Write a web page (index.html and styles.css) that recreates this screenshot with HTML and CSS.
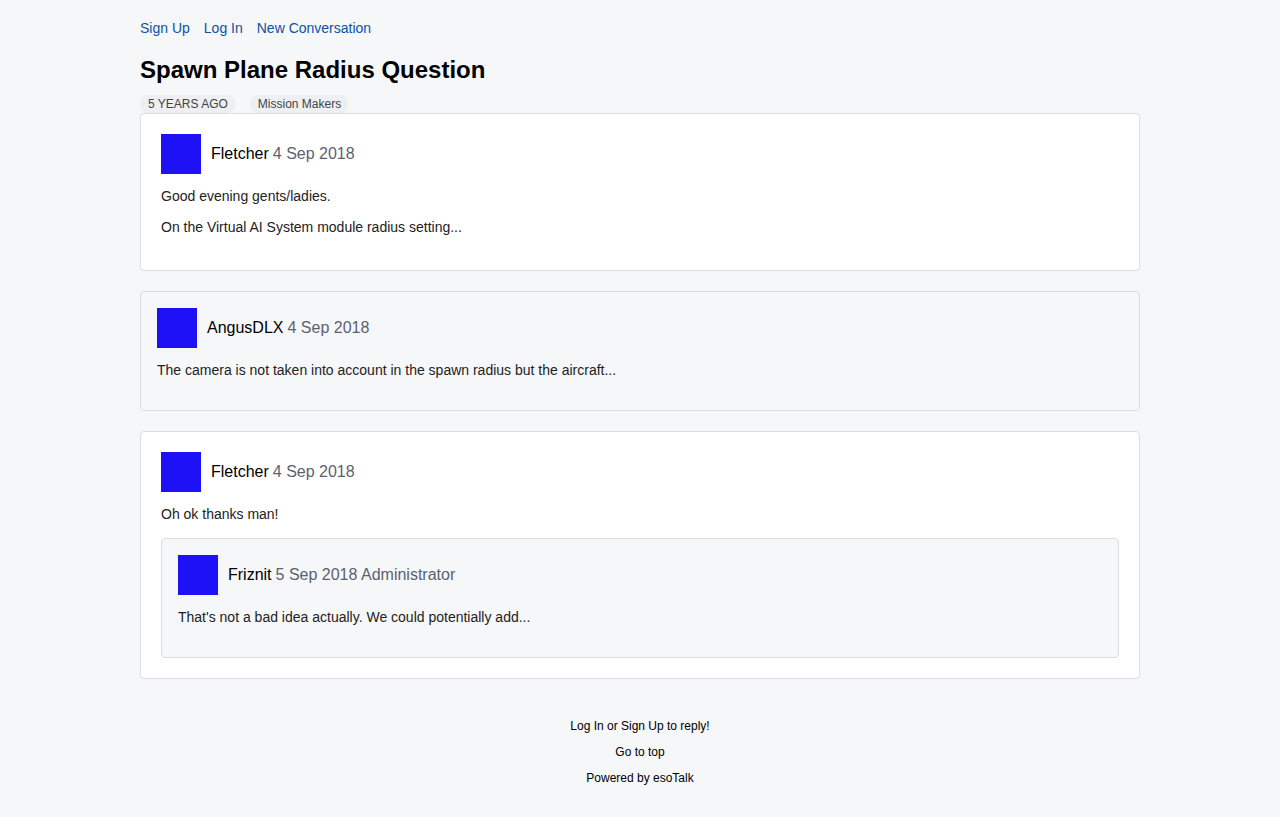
FILE: index.html
```html
<!DOCTYPE html>
<html lang="en">
<head>
<meta charset="utf-8">
<title>Spawn Plane Radius Question</title>
<link rel="stylesheet" href="styles.css">
</head>
<body>
<div class="page">
  <nav class="topnav">
    <a href="#">Sign Up</a>
    <a href="#">Log In</a>
    <a href="#">New Conversation</a>
  </nav>
  <h1 class="title">Spawn Plane Radius Question</h1>
  <div class="meta">
    <span class="tag">5 YEARS AGO</span>
    <span class="tag">Mission Makers</span>
  </div>

  <div class="post">
    <div class="post-head">
      <span class="avatar"></span>
      <span class="name">Fletcher</span>
      <span class="info">4 Sep 2018</span>
    </div>
    <p>Good evening gents/ladies.</p>
    <p>On the Virtual AI System module radius setting...</p>
  </div>

  <div class="post post-alt">
    <div class="post-head">
      <span class="avatar"></span>
      <span class="name">AngusDLX</span>
      <span class="info">4 Sep 2018</span>
    </div>
    <p>The camera is not taken into account in the spawn radius but the aircraft...</p>
  </div>

  <div class="post">
    <div class="post-head">
      <span class="avatar"></span>
      <span class="name">Fletcher</span>
      <span class="info">4 Sep 2018</span>
    </div>
    <p>Oh ok thanks man!</p>
    <div class="post post-alt post-nested">
      <div class="post-head">
        <span class="avatar"></span>
        <span class="name">Friznit</span>
        <span class="info">5 Sep 2018 Administrator</span>
      </div>
      <p>That's not a bad idea actually. We could potentially add...</p>
    </div>
  </div>

  <footer class="foot">
    <div>Log In or Sign Up to reply!</div>
    <div>Go to top</div>
    <div>Powered by esoTalk</div>
  </footer>
</div>
</body>
</html>
```

FILE: styles.css
```css
html, body {
  margin: 0;
  padding: 0;
  background: #f6f7f9;
  font-family: "Liberation Sans", Arial, sans-serif;
  color: #222;
}
.page {
  width: 1000px;
  margin: 0 auto;
  padding-top: 20px;
}
.topnav {
  display: flex;
  gap: 14px;
  font-size: 14px;
  line-height: 16px;
}
.topnav a {
  color: #0b53a3;
  text-decoration: none;
}
.title {
  margin: 20px 0 0;
  font-size: 24px;
  line-height: 28px;
  font-weight: bold;
  color: #000;
}
.meta {
  display: flex;
  gap: 15px;
  margin-top: 11px;
  height: 18px;
  font-size: 12px;
}
.tag {
  display: inline-block;
  height: 17px;
  line-height: 16px;
  padding: 1px 7px 0 8px;
  border-radius: 8px;
  background: #edeff2;
  color: #444;
}
.post {
  background: #fff;
  border: 1px solid #dcdde1;
  border-radius: 4px;
  padding: 20px;
  margin-bottom: 20px;
}
.post-alt {
  background: #f6f7f9;
  padding: 16px 16px 17px;
}
.post-nested {
  margin: 15px 0 0;
}
.post-head {
  display: flex;
  align-items: center;
  height: 40px;
  font-size: 16px;
}
.avatar {
  width: 40px;
  height: 40px;
  background: #1e11f5;
  margin-right: 10px;
  flex: none;
}
.name {
  color: #000;
}
.info {
  color: #5a6270;
  margin-left: 4px;
}
.post p {
  margin: 14px 0;
  font-size: 14px;
  line-height: 17px;
  color: #222;
}
.foot {
  margin-top: 40px;
  text-align: center;
  font-size: 12px;
  line-height: 14px;
  color: #000;
  display: flex;
  flex-direction: column;
  gap: 12px;
}
```
